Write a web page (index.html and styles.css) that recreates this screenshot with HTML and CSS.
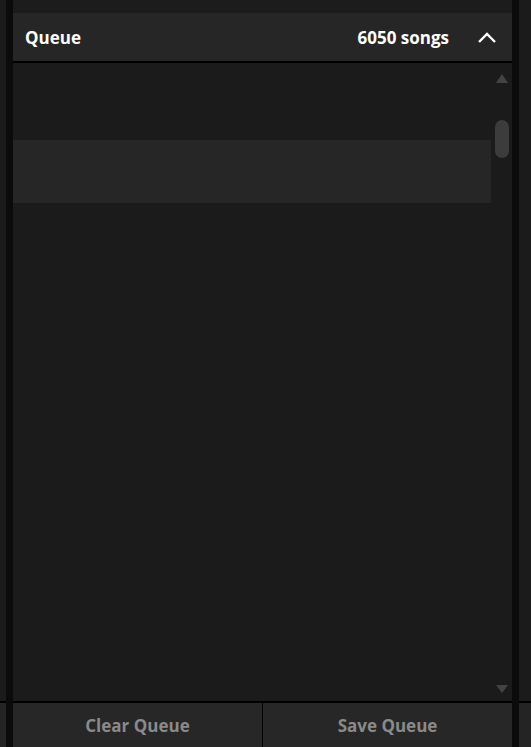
FILE: index.html
```html
<!DOCTYPE html>
<html lang="en">
<head>
    <meta charset="UTF-8">
    <meta name="viewport" content="width=device-width, initial-scale=1.0">
    <title>Queue</title>
    <link rel="stylesheet" href="styles.css">
</head>
<body>
    <div class="app">
        <div class="edge edge-left"><div class="edge-foot"></div></div>
        <div class="rail"></div>

        <div class="panel">
            <div class="panel-top"></div>
            <div class="queue-header">
                <span class="queue-title">Queue</span>
                <span class="queue-count">6050 songs</span>
                <svg class="chevron" width="20" height="12" viewBox="0 0 20 12">
                    <path d="M2 11 L10 3 L18 11" fill="none" stroke="#fff" stroke-width="2.4"/>
                </svg>
            </div>

            <div class="queue-list">
                <div class="rows">
                    <div class="row"></div>
                    <div class="row active"></div>
                </div>
                <div class="scrollbar">
                    <div class="arrow arrow-up"></div>
                    <div class="thumb"></div>
                    <div class="track"></div>
                    <div class="arrow arrow-down"></div>
                </div>
            </div>

            <div class="queue-footer">
                <button class="footer-btn">Clear Queue</button>
                <button class="footer-btn">Save Queue</button>
            </div>
        </div>

        <div class="rail"></div>
        <div class="edge edge-right"><div class="edge-foot"></div></div>
    </div>
</body>
</html>
```

FILE: styles.css
```css
body {
    margin: 0;
    background-color: #1c1c1c;
    font-family: "Open Sans", "Noto Sans", sans-serif;
}
.app {
    display: flex;
    height: 747px;
    overflow: hidden;
}
.edge {
    display: flex;
    flex-direction: column;
    justify-content: flex-end;
    background-color: #1b1b1b;
}
.edge-left {
    width: 6px;
}
.edge-right {
    width: 12px;
}
.edge-foot {
    height: 44px;
    border-top: 2px solid #000;
    background-color: #242424;
}
.rail {
    width: 7px;
    background-color: #0b0b0b;
}
.panel {
    flex: 1;
    display: flex;
    flex-direction: column;
    background-color: #1b1b1b;
}
.panel-top {
    height: 13px;
    background-color: #1c1c1c;
}
.queue-header {
    height: 48px;
    display: flex;
    align-items: center;
    padding: 0 15px 0 12px;
    background-color: #262626;
    border-bottom: 2px solid #000;
    color: #fff;
    font-weight: 700;
    font-size: 17px;
}
.queue-title {
    flex: 1;
}
.queue-count {
    margin-right: 28px;
}
.chevron {
    display: block;
}
.queue-list {
    flex: 1;
    display: flex;
}
.rows {
    flex: 1;
}
.row {
    height: 77px;
}
.row.active {
    height: 63px;
    background-color: #262626;
}
.scrollbar {
    width: 21px;
    display: flex;
    flex-direction: column;
    align-items: center;
    padding: 11px 0 8px;
    box-sizing: border-box;
}
.arrow {
    width: 0;
    height: 0;
    border-left: 6.5px solid transparent;
    border-right: 6.5px solid transparent;
}
.arrow-up {
    border-bottom: 9px solid #434343;
}
.arrow-down {
    border-top: 8px solid #434343;
}
.thumb {
    width: 14px;
    height: 38px;
    margin-top: 37px;
    border-radius: 7px;
    background-color: #3c3c3c;
}
.track {
    flex: 1;
}
.queue-footer {
    height: 44px;
    display: flex;
    border-top: 2px solid #000;
}
.footer-btn {
    flex: 1;
    border: none;
    background-color: #272727;
    color: #8a8a8a;
    font-family: inherit;
    font-weight: 700;
    font-size: 17px;
    padding: 0;
}
.footer-btn + .footer-btn {
    border-left: 1px solid #000;
}
```
